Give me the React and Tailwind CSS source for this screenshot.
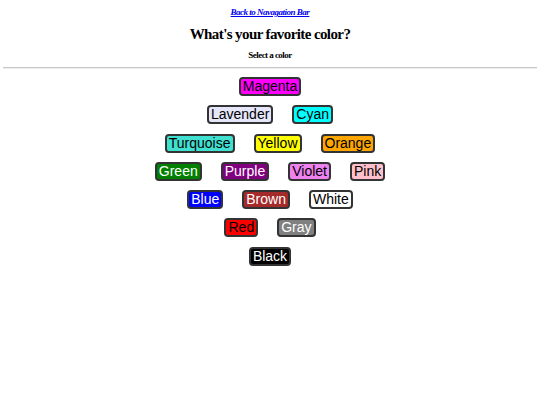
export default function App() {
  const rows = [
    [["Magenta", "bg-[#ff00ff]", "text-black"]],
    [["Lavender", "bg-[#e6e6fa]", "text-black"], ["Cyan", "bg-[#00ffff]", "text-black"]],
    [["Turquoise", "bg-[#40e0d0]", "text-black"], ["Yellow", "bg-[#ffff00]", "text-black"], ["Orange", "bg-[#ffa500]", "text-black"]],
    [["Green", "bg-[#008000]", "text-white"], ["Purple", "bg-[#800080]", "text-white"], ["Violet", "bg-[#ee82ee]", "text-black"], ["Pink", "bg-[#ffc0cb]", "text-black"]],
    [["Blue", "bg-[#0000ff]", "text-white"], ["Brown", "bg-[#a52a2a]", "text-white"], ["White", "bg-white", "text-black"]],
    [["Red", "bg-[#ff0000]", "text-black"], ["Gray", "bg-[#808080]", "text-white"]],
    [["Black", "bg-black", "text-white"]],
  ];
  return (
    <div className="w-[540px] h-[405px] bg-white font-['Liberation_Serif',serif]">
      <div className="pt-[6px] flex flex-col items-center">
        <a href="#" className="text-[9px] leading-[12px] font-bold italic underline tracking-[-0.5px] text-[#0000ee]">Back to Navagation Bar</a>
        <h1 className="mt-[6px] text-[15px] leading-[20px] font-bold tracking-[-0.6px] text-black">What's your favorite color?</h1>
        <div className="mt-[5px] text-[9px] leading-[12px] font-bold tracking-[-0.55px] text-black">Select a color</div>
      </div>
      <div className="mx-[3px] mt-[6px] h-[2px] border-t border-[#c8c8c8] border-b border-b-[#eeeeee]" />
      <div className="mt-[8px] flex flex-col items-center gap-[9.3px]">
        {rows.map((row, i) => (
          <div key={i} className="flex gap-[19px]">
            {row.map(([name, bg, fg]) => (
              <button
                key={name}
                className={`${bg} ${fg} font-['Liberation_Sans',Arial,sans-serif] text-[14px] leading-[15px] px-[2px] border-2 border-[#333] rounded-[4px]`}
              >
                {name}
              </button>
            ))}
          </div>
        ))}
      </div>
    </div>
  );
}
